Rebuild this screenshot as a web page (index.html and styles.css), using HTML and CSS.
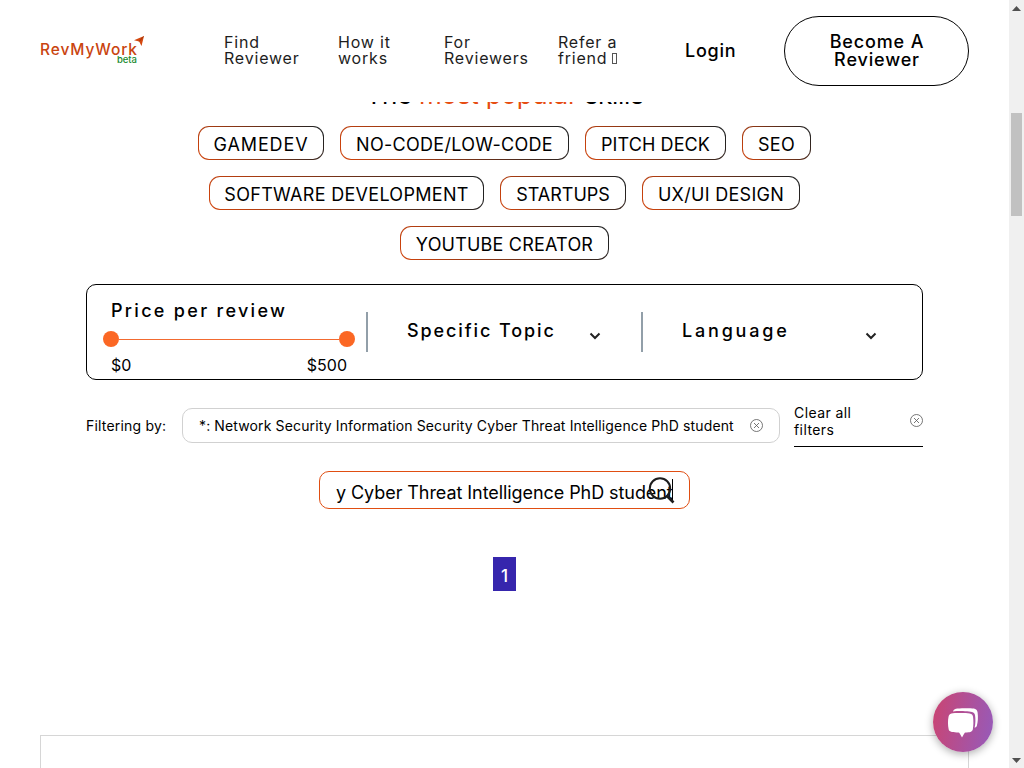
FILE: index.html
```html
<!DOCTYPE html>
<html lang="en">
<head>
<meta charset="utf-8">
<title>RevMyWork</title>
<link rel="stylesheet" href="styles.css">
</head>
<body>
<div class="page">
  <header class="header">
    <a class="logo"><span class="logo-name">RevMyWork</span><span class="logo-beta">beta</span>
      <svg class="logo-arrow" width="10" height="10" viewBox="0 0 10 10"><path d="M10 0 7.500 10 5.200 5.600 0 4.200Z" fill="#d4480f"/><path d="m9.500.5-4.300 5" stroke="#8f2d08" stroke-width=".8"/></svg>
    </a>
    <nav class="nav">
      <a class="nav-find">Find<br>Reviewer</a>
      <a class="nav-how">How it<br>works</a>
      <a class="nav-for">For<br>Reviewers</a>
      <a class="nav-refer">Refer a<br>friend <i class="missing"></i></a>
    </nav>
    <a class="login">Login</a>
    <a class="become">Become A<br>Reviewer</a>
  </header>
  <main class="main">
    <h2 class="title">The <em>most popular</em> skills</h2>
    <div class="skills">
      <div class="skill-row"><a class="chip gamedev">GAMEDEV</a><a class="chip nocode">NO-CODE/LOW-CODE</a><a class="chip pitch">PITCH DECK</a><a class="chip seo">SEO</a></div>
      <div class="skill-row"><a class="chip software">SOFTWARE DEVELOPMENT</a><a class="chip startups">STARTUPS</a><a class="chip ux">UX/UI DESIGN</a></div>
      <div class="skill-row"><a class="chip youtube">YOUTUBE CREATOR</a></div>
    </div>
    <section class="filters">
      <div class="price">
        <div class="price-label">Price per review</div>
        <div class="slider"><span class="knob"></span><span class="track"></span><span class="knob"></span></div>
        <div class="price-range"><span>$0</span><span>$500</span></div>
      </div>
      <div class="select topic"><span>Specific Topic</span><svg width="12" height="8" viewBox="0 0 12 8"><path d="m1.5 1.5 4.5 4.5 4.5-4.5" fill="none" stroke="#222" stroke-width="2"/></svg></div>
      <div class="select language"><span>Language</span><svg width="12" height="8" viewBox="0 0 12 8"><path d="m1.5 1.5 4.5 4.5 4.5-4.5" fill="none" stroke="#222" stroke-width="2"/></svg></div>
    </section>
    <section class="active">
      <span class="by">Filtering by:</span>
      <div class="tag"><span>*: Network Security Information Security Cyber Threat Intelligence PhD student</span><svg width="13" height="13" viewBox="0 0 13 13"><g fill="none" stroke="#555" stroke-width=".8"><circle cx="6.5" cy="6.5" r="6"/><path d="m4 4 5 5m0-5-5 5"/></g></svg></div>
      <div class="clear"><span>Clear all<br>filters</span><svg width="13" height="13" viewBox="0 0 13 13"><g fill="none" stroke="#555" stroke-width=".8"><circle cx="6.5" cy="6.5" r="6"/><path d="m4 4 5 5m0-5-5 5"/></g></svg></div>
    </section>
    <div class="search">
      <span class="query">y Cyber Threat Intelligence PhD student</span><span class="caret"></span>
      <svg class="magnifier" width="28" height="28" viewBox="0 0 28 28"><g fill="none" stroke="#1c1c1c" stroke-width="2"><circle cx="12" cy="11.5" r="10.2"/><path d="m18.5 18.5 7 7" stroke-width="2.6"/></g></svg>
    </div>
    <div class="pager">1</div>
    <div class="panel"></div>
  </main>
  <a class="chat"><svg width="32" height="31" viewBox="0 0 32 31"><path d="M6 4.500C7 1.500 9 1.300 18 1.200s12-.1 12.600 4.300c.6 5 .4 9-.8 13.500-.5 1.300-1.500 1.700-2.200 1.700 1-4 1-9 .4-12.700C27.400 4.500 24 4.500 18 4.200 13 4 9 4.200 6 4.500Z" fill="#fff"/><path d="M13 6c9 0 12.600.200 13 3.500.600 4.500.500 9-.200 13-.600 2.600-3.300 2.800-7.300 3-1 0-1.500 1.500-3.500 5-2-3.500-2.500-5-3.500-5-5-.200-9.300-.200-9.800-3-.9-4.500-.9-9-.2-12.500C2.100 6.300 5 6 13 6Z" fill="#fff"/></svg></a>
</div>
<div class="scrollbar">
  <svg width="9" height="5" viewBox="0 0 9 5"><path d="M0 5h9L4.500 0Z" fill="#505050"/></svg>
  <span class="thumb"></span>
  <svg width="9" height="5" viewBox="0 0 9 5"><path d="M0 0h9L4.500 5Z" fill="#505050"/></svg>
</div>
</body>
</html>
```
FILE: styles.css
```css
* { box-sizing: border-box; }
body { margin: 0; display: flex; width: 1024px; height: 768px; overflow: hidden; font-family: Inter, "Liberation Sans", sans-serif; color: #000; background: #fff; }
.page { width: 1009px; height: 768px; overflow: hidden; position: relative; }
.header { position: relative; z-index: 2; height: 102px; padding: 0 40px; display: flex; align-items: center; background: #fff; }
.logo { width: 184px; height: 32px; padding-top: 6px; position: relative; color: #c9440f; font-size: 15.500px; line-height: 18px; font-weight: 500; letter-spacing: .9px; }
.logo-name { display: block; }
.logo-beta { position: absolute; left: 77px; top: 20px; color: #17892c; font-size: 9.500px; line-height: 10px; letter-spacing: -.1px; }
.logo-arrow { position: absolute; left: 94px; top: 1px; }
.nav { display: flex; width: 461px; padding-bottom: 2px; color: #1d1d1d; font-size: 16px; line-height: 16px; letter-spacing: .8px; }
.nav a { flex: none; white-space: nowrap; }
.nav-find { width: 114px; }
.nav-how { width: 106px; }
.nav-for { width: 114px; }
.missing { display: inline-block; width: 5px; height: 11px; border: 1px solid #555; margin-left: -1px; }
.login { width: 99px; padding-bottom: 1px; font-size: 18px; font-weight: 450; letter-spacing: .75px; }
.become { width: 185px; height: 70px; border: 1px solid #000; border-radius: 35px; display: flex; justify-content: center; align-items: center; text-align: center; font-size: 18px; line-height: 18px; font-weight: 450; letter-spacing: .85px; padding-left: 1px; }
.title { margin: -25px 0 0; height: 49px; text-align: center; font-size: 26px; line-height: 36px; font-weight: 400; letter-spacing: -.25px; }
.title em { font-style: normal; color: #e64d11; }
.skills { display: flex; flex-direction: column; gap: 16px; }
.skill-row { display: flex; justify-content: center; gap: 16px; }
.chip { height: 34px; border: 1px solid transparent; border-radius: 11px; background: linear-gradient(#fff, #fff) padding-box, linear-gradient(55deg, #d2440c, #222 95%) border-box; text-align: center; font-size: 18px; line-height: 36px; white-space: nowrap; letter-spacing: .3px; }
.gamedev { width: 126px; letter-spacing: .87px; }
.nocode { width: 229px; }
.pitch { width: 141px; letter-spacing: .1px; }
.seo { width: 69px; }
.software { width: 275px; }
.startups { width: 126px; letter-spacing: 0; }
.ux { width: 158px; }
.youtube { width: 209px; letter-spacing: .2px; }
.filters { margin: 24px 86px 0; height: 96px; border: 1px solid #000; border-radius: 10px; display: flex; align-items: center; font-size: 18px; font-weight: 450; letter-spacing: 1.9px; }
.price { width: 279px; height: 94px; padding: 15px 17px 0 16px; }
.price-label { padding-left: 8px; line-height: 22px; letter-spacing: 2.300px; }
.slider { margin-top: 9px; display: flex; align-items: center; width: 252px; }
.knob { width: 16px; height: 16px; border-radius: 50%; background: #fb6724; }
.track { flex: 1; height: 1px; background: #f26a30; }
.price-range { padding: 8px 2px 0 8px; display: flex; justify-content: space-between; font-size: 16px; line-height: 20px; font-weight: 400; letter-spacing: 0; }
.select { height: 40px; display: flex; align-items: center; border-left: 2px solid #929fa9; padding-left: 39px; }
.select span { line-height: 38px; padding-bottom: 2px; }
.select svg { margin: 7px 0 0 auto; }
.topic { width: 275px; padding-right: 40px; }
.language { width: 281px; padding-right: 45px; letter-spacing: 2.800px; }
.active { margin: 24px 86px 0; height: 43px; display: flex; font-size: 14px; letter-spacing: .13px; }
.by { width: 96px; padding-top: 13px; line-height: 18px; letter-spacing: .19px; }
.tag { width: 598px; height: 35px; margin-top: 4px; border: 1px solid #d1d1d1; border-radius: 10px; padding: 0 16px; display: flex; align-items: center; justify-content: space-between; white-space: nowrap; }
.clear { width: 129px; margin-left: 14px; border-bottom: 1px solid #000; display: flex; justify-content: space-between; line-height: 17px; letter-spacing: .42px; }
.clear svg { margin-top: 10px; }
.search { position: relative; width: 371px; height: 38px; margin: 24px auto 0 319px; border: 1px solid #e04e12; border-radius: 10px; padding: 0 16px; display: flex; align-items: center; font-size: 18px; letter-spacing: -.07px; white-space: nowrap; }
.query { width: 336px; padding-top: 4px; }
.caret { width: 1px; height: 23px; background: #000; }
.magnifier { position: absolute; left: 328px; top: 5px; }
.pager { width: 23px; height: 34px; margin: 48px auto 0 493px; background: #3626ad; color: #fff; text-align: center; font-size: 17px; font-weight: 500; line-height: 39px; }
.panel { margin: 144px 40px 0; height: 60px; border: 1px solid #d6d6d6; }
.chat { position: absolute; left: 933px; top: 692px; width: 60px; height: 60px; border-radius: 50%; background: linear-gradient(100deg, #cb4471, #955bbb); box-shadow: 0 2px 8px #0005; display: flex; align-items: center; justify-content: center; }
.scrollbar { width: 15px; height: 768px; padding: 6px 2px 5px; background: #f0f0f0; display: flex; flex-direction: column; align-items: center; }
.thumb { width: 11px; height: 103px; margin: 102px 0 auto; background: #c1c1c1; }
```
